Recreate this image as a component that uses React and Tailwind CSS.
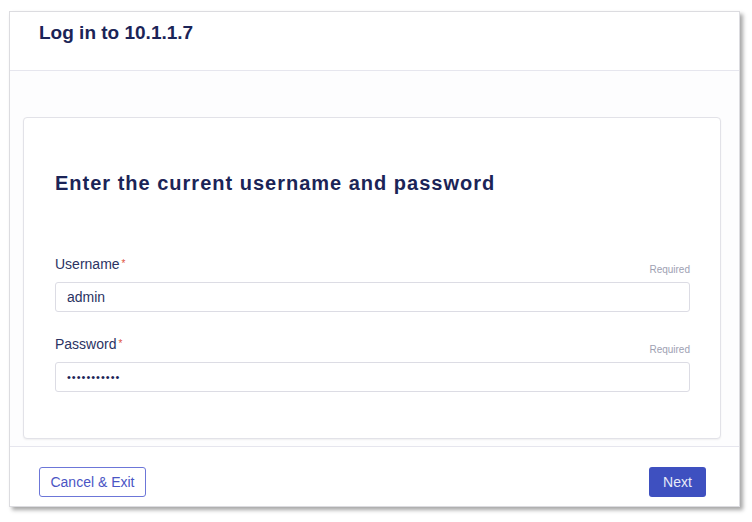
import React from 'react';

export default function App() {
  return (
    <div className="w-[752px] h-[522px] bg-white relative" style={{ fontFamily: '"Liberation Sans", Arial, sans-serif' }}>
      <div className="absolute left-[9px] top-[11px] w-[731px] h-[496px] bg-white border border-[#dcdce0] shadow-[3px_3px_4px_rgba(0,0,0,0.35)] flex flex-col">
        <div className="h-[59px] border-b border-[#e6e6ee] px-[29px] pt-[9px] shrink-0">
          <h1 className="text-[19px] font-bold text-[#1b2457] leading-[24px]">Log in to 10.1.1.7</h1>
        </div>
        <div className="h-[375px] shrink-0 pt-[46px] pl-[13px] pr-[18px] bg-[#fdfdfe]">
          <div className="h-[322px] bg-white border border-[#e2e2e8] rounded-[4px] shadow-[0_1px_2px_rgba(0,0,0,0.06)] pl-[31px] pr-[30px] pt-[52px]">
            <h2 className="text-[20px] font-bold text-[#1b2457] tracking-[1px] leading-[26px]">Enter the current username and password</h2>
            <div className="mt-[60px]">
              <div className="flex items-end justify-between h-[22px]">
                <label className="text-[14px] text-[#2b3363] leading-[18px] mb-[5px]">
                  Username<span className="text-[#e0533d] text-[10px] align-top ml-[2px]">*</span>
                </label>
                <span className="text-[10px] text-[#9ea1b3] mb-[1px]">Required</span>
              </div>
              <div className="mt-[4px] h-[30px] border border-[#dcdce4] rounded-[3px] flex items-center px-[11px] text-[14px] text-[#2b3363]">admin</div>
            </div>
            <div className="mt-[24px]">
              <div className="flex items-end justify-between h-[22px]">
                <label className="text-[14px] text-[#2b3363] leading-[18px] mb-[5px]">
                  Password<span className="text-[#e0533d] text-[10px] align-top ml-[2px]">*</span>
                </label>
                <span className="text-[10px] text-[#9ea1b3] mb-[1px]">Required</span>
              </div>
              <div className="mt-[4px] h-[30px] border border-[#dcdce4] rounded-[3px] flex items-center px-[11px] text-[11px] text-[#1b2457] tracking-[1px]">•••••••••••</div>
            </div>
          </div>
        </div>
        <div className="flex-1 border-t border-[#e6e6ee] flex items-start justify-between pl-[29px] pr-[33px] pt-[20px]">
          <button className="h-[30px] w-[107px] border border-[#6c76d8] rounded-[3px] text-[14px] text-[#4a55c4] bg-white">Cancel &amp; Exit</button>
          <button className="h-[30px] w-[57px] rounded-[3px] text-[14px] text-[#e8eaf8] bg-[#3e50c0]">Next</button>
        </div>
      </div>
    </div>
  );
}
